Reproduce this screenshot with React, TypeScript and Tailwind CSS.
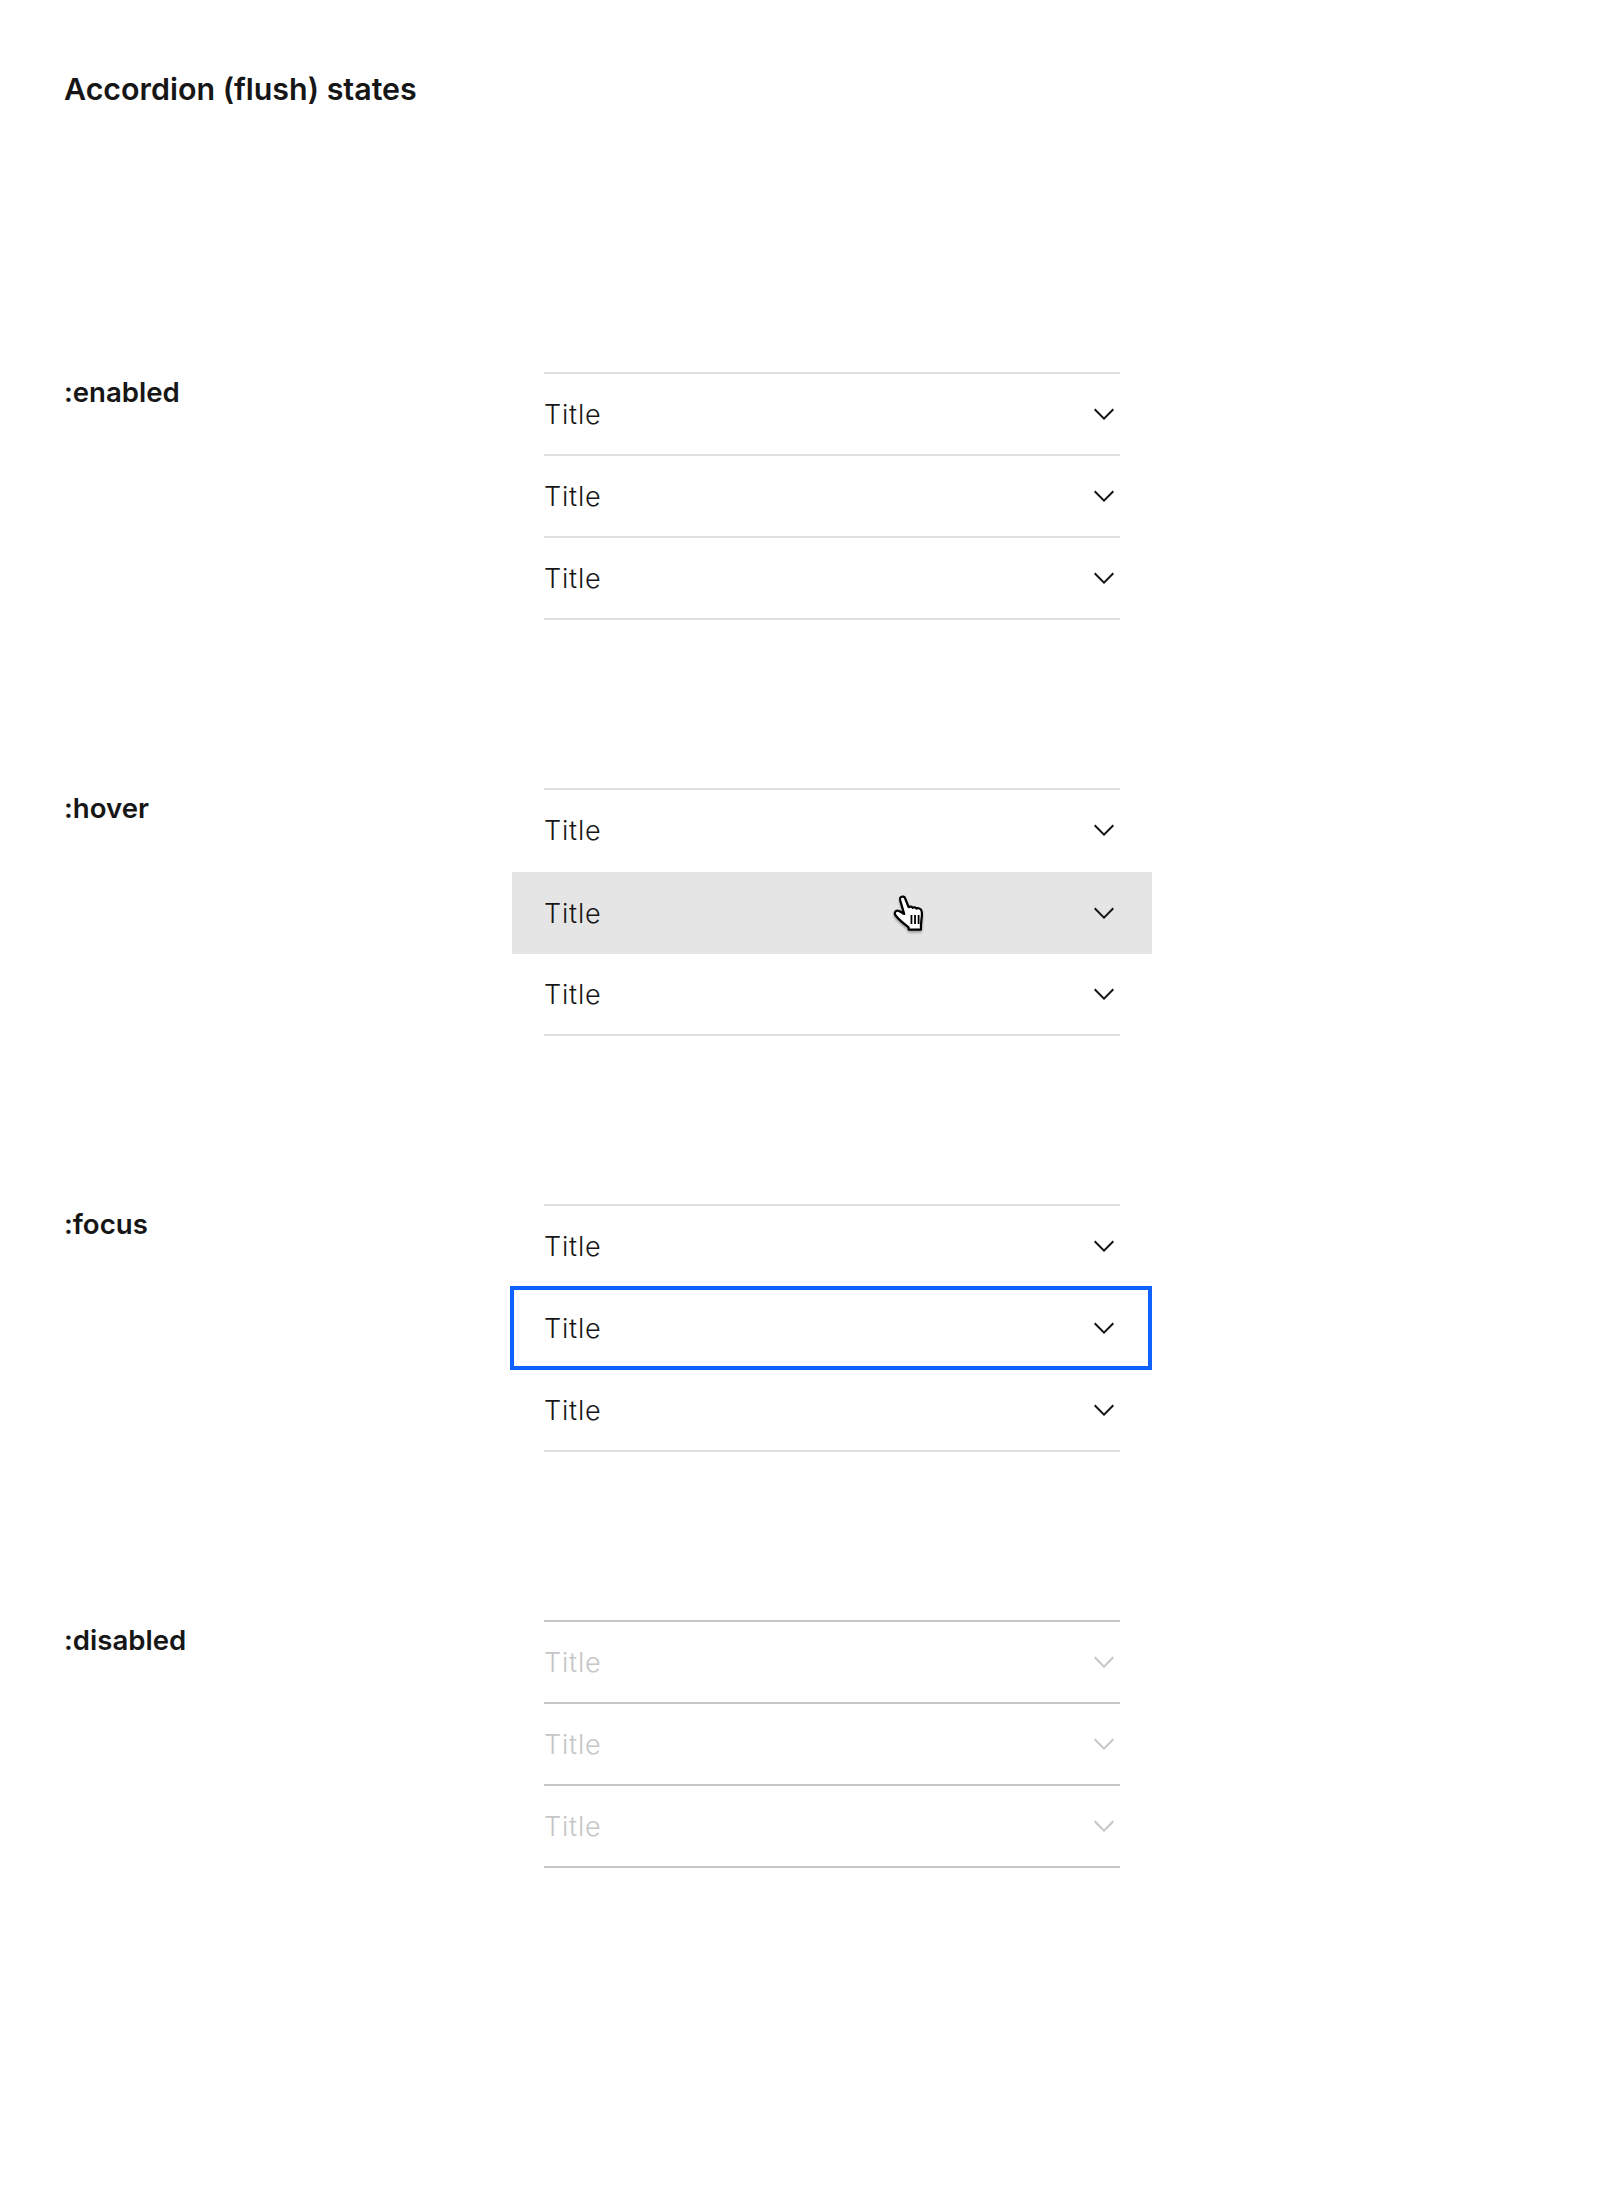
const FONT = "font-['Inter','Liberation_Sans',sans-serif]";

function ChevronDown({ disabled }: { disabled?: boolean }) {
  return (
    <svg viewBox="0 0 32 32" className={`w-8 h-8 ${disabled ? 'fill-[#c6c6c6]' : 'fill-[#161616]'}`}>
      <path d="M16 22L6 12l1.4-1.4L16 19.2l8.6-8.6L26 12z" />
    </svg>
  );
}

function HandCursor() {
  return (
    <svg viewBox="0 0 50 48" className="absolute left-[372px] top-[16px] w-[56px] h-[54px] drop-shadow-[0_2px_1px_rgba(0,0,0,0.3)]">
      <path
        d="M15 8c1.500-1 3.500-.5 4 1.500L22 17c1-1 3-.5 3.500.5 1-.8 3-.3 3.500.7 1-.6 3-.3 4 1 1 1.500 1 5 .5 8L33 33v4H22v-2c-4-3-9-7-12-11-1-2 0-4 2-4s4 2 6 3L14.500 11c-.5-1-.5-2 .5-3z"
        fill="#fff"
        stroke="#000"
        strokeWidth="2"
        strokeLinejoin="round"
      />
      <path d="M24.500 24v8M27.700 24v8M30.900 24v8" stroke="#000" strokeWidth="1.600" />
    </svg>
  );
}

const TITLE = 'pt-[1px] text-[27px] leading-[32px] tracking-[0.8px] font-light';

function Row({ state, noLine }: { state: string; noLine?: boolean }) {
  if (state === 'hover') {
    return (
      <div className="relative flex items-center justify-between h-[82px] -mx-8 pl-8 pr-8 bg-[#e5e5e5]">
        <span className={`${TITLE} text-[#161616]`}>Title</span>
        <HandCursor />
        <ChevronDown />
      </div>
    );
  }
  if (state === 'focus') {
    return (
      <div className="relative flex items-center justify-between h-[84px] -mt-[2px] -ml-[34px] -mr-8 pl-[30px] pr-7 border-4 border-[#0f62fe] bg-white">
        <span className={`${TITLE} text-[#161616]`}>Title</span>
        <ChevronDown />
      </div>
    );
  }
  const disabled = state === 'disabled';
  return (
    <div
      className={`flex items-center justify-between h-[82px] border-b-2 ${
        noLine ? 'border-transparent' : disabled ? 'border-[#c6c6c6]' : 'border-[#e0e0e0]'
      }`}
    >
      <span className={`${TITLE} ${disabled ? 'text-[#c6c6c6]' : 'text-[#161616]'}`}>Title</span>
      <ChevronDown disabled={disabled} />
    </div>
  );
}

function Section({ label, rows, line }: { label: string; rows: React.ReactNode; line: string }) {
  return (
    <div className="flex h-[416px]">
      <div className="w-[480px] pt-[3px] text-[27.6px] leading-[34px] font-semibold text-[#161616]">{label}</div>
      <div className={`w-[576px] h-fit border-t-2 ${line}`}>{rows}</div>
    </div>
  );
}

export default function App() {
  return (
    <div className={`min-h-[2190px] bg-white pl-16 pt-[69px] ${FONT}`}>
      <h1 className="h-[303px] text-[30.4px] leading-[40px] font-semibold text-[#161616]">Accordion (flush) states</h1>
      <Section
        label=":enabled"
        line="border-[#e0e0e0]"
        rows={
          <>
            <Row state="enabled" />
            <Row state="enabled" />
            <Row state="enabled" />
          </>
        }
      />
      <Section
        label=":hover"
        line="border-[#e0e0e0]"
        rows={
          <>
            <Row state="enabled" noLine />
            <Row state="hover" />
            <Row state="enabled" />
          </>
        }
      />
      <Section
        label=":focus"
        line="border-[#e0e0e0]"
        rows={
          <>
            <Row state="enabled" noLine />
            <Row state="focus" />
            <Row state="enabled" />
          </>
        }
      />
      <Section
        label=":disabled"
        line="border-[#c6c6c6]"
        rows={
          <>
            <Row state="disabled" />
            <Row state="disabled" />
            <Row state="disabled" />
          </>
        }
      />
    </div>
  );
}
